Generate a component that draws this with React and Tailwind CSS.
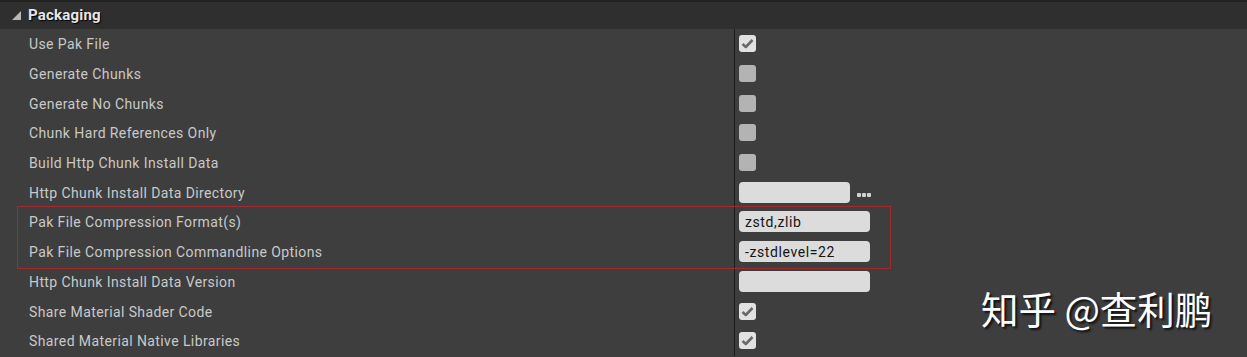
import React from 'react';

const rows = [
  { label: 'Use Pak File', type: 'check', checked: true },
  { label: 'Generate Chunks', type: 'check' },
  { label: 'Generate No Chunks', type: 'check' },
  { label: 'Chunk Hard References Only', type: 'check' },
  { label: 'Build Http Chunk Install Data', type: 'check' },
  { label: 'Http Chunk Install Data Directory', type: 'dir' },
  { label: 'Pak File Compression Format(s)', type: 'text', value: 'zstd,zlib' },
  { label: 'Pak File Compression Commandline Options', type: 'text', value: '-zstdlevel=22' },
  { label: 'Http Chunk Install Data Version', type: 'text', value: '' },
  { label: 'Share Material Shader Code', type: 'check', checked: true },
  { label: 'Shared Material Native Libraries', type: 'check', checked: true },
];

const CheckBox = ({ checked }) => (
  <div
    className={`w-[17px] h-[17px] rounded-[3px] flex items-center justify-center ${
      checked ? 'bg-[#e2e2e2]' : 'bg-[#b3b3b3]'
    }`}
  >
    {checked && (
      <svg width="13" height="11" viewBox="0 0 13 11">
        <path d="M1.5 6 L4.8 9 L11.5 2" fill="none" stroke="#6a6a6a" strokeWidth="2.6" strokeLinejoin="round" />
      </svg>
    )}
  </div>
);

const Value = ({ row }) => {
  if (row.type === 'check') return <CheckBox checked={row.checked} />;
  if (row.type === 'dir')
    return (
      <div className="flex items-center gap-[7px]">
        <div className="w-[111px] h-[21px] rounded-[4px] bg-[#dcdcdc]" />
        <div className="flex gap-[1px] mt-[5px]">
          <span className="w-[4px] h-[4px] rounded-[1px] bg-[#d2d2d2]" />
          <span className="w-[4px] h-[4px] rounded-[1px] bg-[#d2d2d2]" />
          <span className="w-[4px] h-[4px] rounded-[1px] bg-[#d2d2d2]" />
        </div>
      </div>
    );
  return (
    <div className="w-[131px] h-[21px] rounded-[4px] bg-[#dcdcdc] flex items-center pl-[6px] pt-[1px] text-[14px] text-[#151515] tracking-[0.6px]">
      {row.value}
    </div>
  );
};

const Row = ({ row }) => (
  <div className="flex h-[29.7px] items-center">
    <div className="w-[734px] pl-[29px] pt-[2px] text-[14px] text-[#c9c9c9] tracking-[0.4px]">{row.label}</div>
    <div className="w-px self-stretch bg-[#1c1c1c]" />
    <div className="pl-[4px] flex items-center">
      <Value row={row} />
    </div>
  </div>
);

export default function App() {
  return (
    <div
      className="relative w-[1247px] h-[357px] overflow-hidden bg-[#3e3e3e]"
      style={{ fontFamily: 'Roboto, "Noto Sans", sans-serif' }}
    >
      <div className="h-[2px] bg-[#222222]" />
      <div className="h-[27px] bg-[#2f2f2f] flex items-center pl-[12px] gap-[7px]">
        <svg width="9" height="9" viewBox="0 0 9 9">
          <polygon points="9,0 9,9 0,9" fill="#b8b8b8" />
        </svg>
        <span
          className="text-[15px] font-bold text-[#e6e6e6] tracking-[0.2px]"
          style={{ textShadow: '1px 1px 1px #000' }}
        >
          Packaging
        </span>
      </div>
      <div className="relative">
        {rows.map((r) => (
          <Row key={r.label} row={r} />
        ))}
        <div className="absolute left-[17px] top-[177px] w-[874px] h-[63px] border border-[#a02a2e] pointer-events-none" />
      </div>
      <div
        className="absolute left-[981px] top-[280px] text-[37.5px] text-white"
        style={{
          fontFamily: '"Noto Sans CJK SC", sans-serif',
          textShadow: '2px 2px 2px #111',
        }}
      >
        知乎 @查利鹏
      </div>
    </div>
  );
}
